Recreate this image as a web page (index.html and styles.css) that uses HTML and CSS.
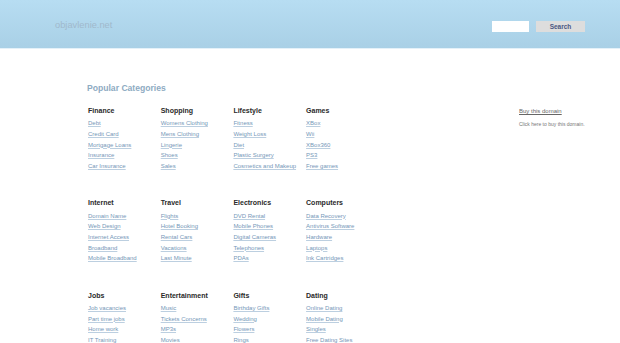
FILE: index.html
```html
<!DOCTYPE html>
<html lang="en">
<head>
    <meta charset="UTF-8">
    <meta name="viewport" content="width=device-width, initial-scale=1.0">
    <title>objavlenie.net</title>
    <link rel="stylesheet" href="styles.css">
</head>
<body>
    <div class="topbar">
        <a class="logo" href="#">objavlenie.net</a>
        <form class="search">
            <input type="text" class="search-box" />
            <button type="button" class="search-btn">Search</button>
        </form>
    </div>

    <div class="page">
        <div class="main">
            <h2 class="topic">Popular Categories</h2>
            <div class="grid">
                <div class="cat">
                    <h3>Finance</h3>
                    <ul>
                        <li><a href="#">Debt</a></li>
                        <li><a href="#">Credit Card</a></li>
                        <li><a href="#">Mortgage Loans</a></li>
                        <li><a href="#">Insurance</a></li>
                        <li><a href="#">Car Insurance</a></li>
                    </ul>
                </div>
                <div class="cat">
                    <h3>Shopping</h3>
                    <ul>
                        <li><a href="#">Womens Clothing</a></li>
                        <li><a href="#">Mens Clothing</a></li>
                        <li><a href="#">Lingerie</a></li>
                        <li><a href="#">Shoes</a></li>
                        <li><a href="#">Sales</a></li>
                    </ul>
                </div>
                <div class="cat">
                    <h3>Lifestyle</h3>
                    <ul>
                        <li><a href="#">Fitness</a></li>
                        <li><a href="#">Weight Loss</a></li>
                        <li><a href="#">Diet</a></li>
                        <li><a href="#">Plastic Surgery</a></li>
                        <li><a href="#">Cosmetics and Makeup</a></li>
                    </ul>
                </div>
                <div class="cat">
                    <h3>Games</h3>
                    <ul>
                        <li><a href="#">XBox</a></li>
                        <li><a href="#">Wii</a></li>
                        <li><a href="#">XBox360</a></li>
                        <li><a href="#">PS3</a></li>
                        <li><a href="#">Free games</a></li>
                    </ul>
                </div>

                <div class="cat">
                    <h3>Internet</h3>
                    <ul>
                        <li><a href="#">Domain Name</a></li>
                        <li><a href="#">Web Design</a></li>
                        <li><a href="#">Internet Access</a></li>
                        <li><a href="#">Broadband</a></li>
                        <li><a href="#">Mobile Broadband</a></li>
                    </ul>
                </div>
                <div class="cat">
                    <h3>Travel</h3>
                    <ul>
                        <li><a href="#">Flights</a></li>
                        <li><a href="#">Hotel Booking</a></li>
                        <li><a href="#">Rental Cars</a></li>
                        <li><a href="#">Vacations</a></li>
                        <li><a href="#">Last Minute</a></li>
                    </ul>
                </div>
                <div class="cat">
                    <h3>Electronics</h3>
                    <ul>
                        <li><a href="#">DVD Rental</a></li>
                        <li><a href="#">Mobile Phones</a></li>
                        <li><a href="#">Digital Cameras</a></li>
                        <li><a href="#">Telephones</a></li>
                        <li><a href="#">PDAs</a></li>
                    </ul>
                </div>
                <div class="cat">
                    <h3>Computers</h3>
                    <ul>
                        <li><a href="#">Data Recovery</a></li>
                        <li><a href="#">Antivirus Software</a></li>
                        <li><a href="#">Hardware</a></li>
                        <li><a href="#">Laptops</a></li>
                        <li><a href="#">Ink Cartridges</a></li>
                    </ul>
                </div>

                <div class="cat">
                    <h3>Jobs</h3>
                    <ul>
                        <li><a href="#">Job vacancies</a></li>
                        <li><a href="#">Part time jobs</a></li>
                        <li><a href="#">Home work</a></li>
                        <li><a href="#">IT Training</a></li>
                    </ul>
                </div>
                <div class="cat">
                    <h3>Entertainment</h3>
                    <ul>
                        <li><a href="#">Music</a></li>
                        <li><a href="#">Tickets Concerns</a></li>
                        <li><a href="#">MP3s</a></li>
                        <li><a href="#">Movies</a></li>
                    </ul>
                </div>
                <div class="cat">
                    <h3>Gifts</h3>
                    <ul>
                        <li><a href="#">Birthday Gifts</a></li>
                        <li><a href="#">Wedding</a></li>
                        <li><a href="#">Flowers</a></li>
                        <li><a href="#">Rings</a></li>
                    </ul>
                </div>
                <div class="cat">
                    <h3>Dating</h3>
                    <ul>
                        <li><a href="#">Online Dating</a></li>
                        <li><a href="#">Mobile Dating</a></li>
                        <li><a href="#">Singles</a></li>
                        <li><a href="#">Free Dating Sites</a></li>
                    </ul>
                </div>
            </div>
        </div>

        <div class="sidebar">
            <a class="buy" href="#">Buy this domain</a>
            <p class="buy-note">Click here to buy this domain.</p>
        </div>
    </div>
</body>
</html>
```

FILE: styles.css
```css
body {
    font-family: 'Liberation Sans', Arial, sans-serif;
    background-color: #fff;
    margin: 0;
    padding: 0;
}

.topbar {
    height: 48px;
    background: linear-gradient(#b7ddf2, #a9d0e6);
    border-bottom: 1px solid #e4f1f9;
    display: flex;
    align-items: center;
    justify-content: space-between;
    padding: 0 35px 0 55px;
}

.logo {
    font-size: 9.3px;
    color: #a0b9cc;
    text-decoration: none;
    margin-top: 1px;
}

.search {
    display: flex;
    gap: 7px;
    margin: 5px 0 0 0;
}

.search-box {
    width: 37px;
    height: 11px;
    padding: 0;
    border: none;
    background-color: #fff;
    box-sizing: border-box;
}

.search-btn {
    width: 49px;
    height: 11px;
    padding: 0;
    border: none;
    background-color: #dddddd;
    color: #4b5782;
    font-family: 'Liberation Sans', Arial, sans-serif;
    font-size: 6.5px;
    font-weight: bold;
    line-height: 11px;
}

.page {
    display: flex;
    padding: 34px 0 0 87px;
}

.main {
    width: 432px;
}

h2.topic {
    font-size: 8.6px;
    line-height: 10px;
    color: #8eabc2;
    margin: 0 0 13px 0;
}

.grid {
    display: grid;
    grid-template-columns: repeat(4, 72.7px);
    row-gap: 26.5px;
    padding-left: 1px;
}

.cat h3 {
    font-size: 7px;
    line-height: 10px;
    color: #2a2a2a;
    margin: 0 0 2.3px 0;
}

.cat ul {
    list-style: none;
    margin: 0;
    padding: 0;
}

.cat li {
    font-size: 6px;
    line-height: 10.7px;
    white-space: nowrap;
}

.cat a {
    color: #7597b8;
    text-decoration: underline;
    text-decoration-color: #bccfe0;
}

.sidebar {
    padding-top: 23px;
}

.buy {
    display: block;
    font-size: 6px;
    line-height: 10px;
    color: #666;
    text-decoration: underline;
}

.buy-note {
    font-size: 5px;
    line-height: 10px;
    color: #777;
    margin: 3px 0 0 0;
}
```
